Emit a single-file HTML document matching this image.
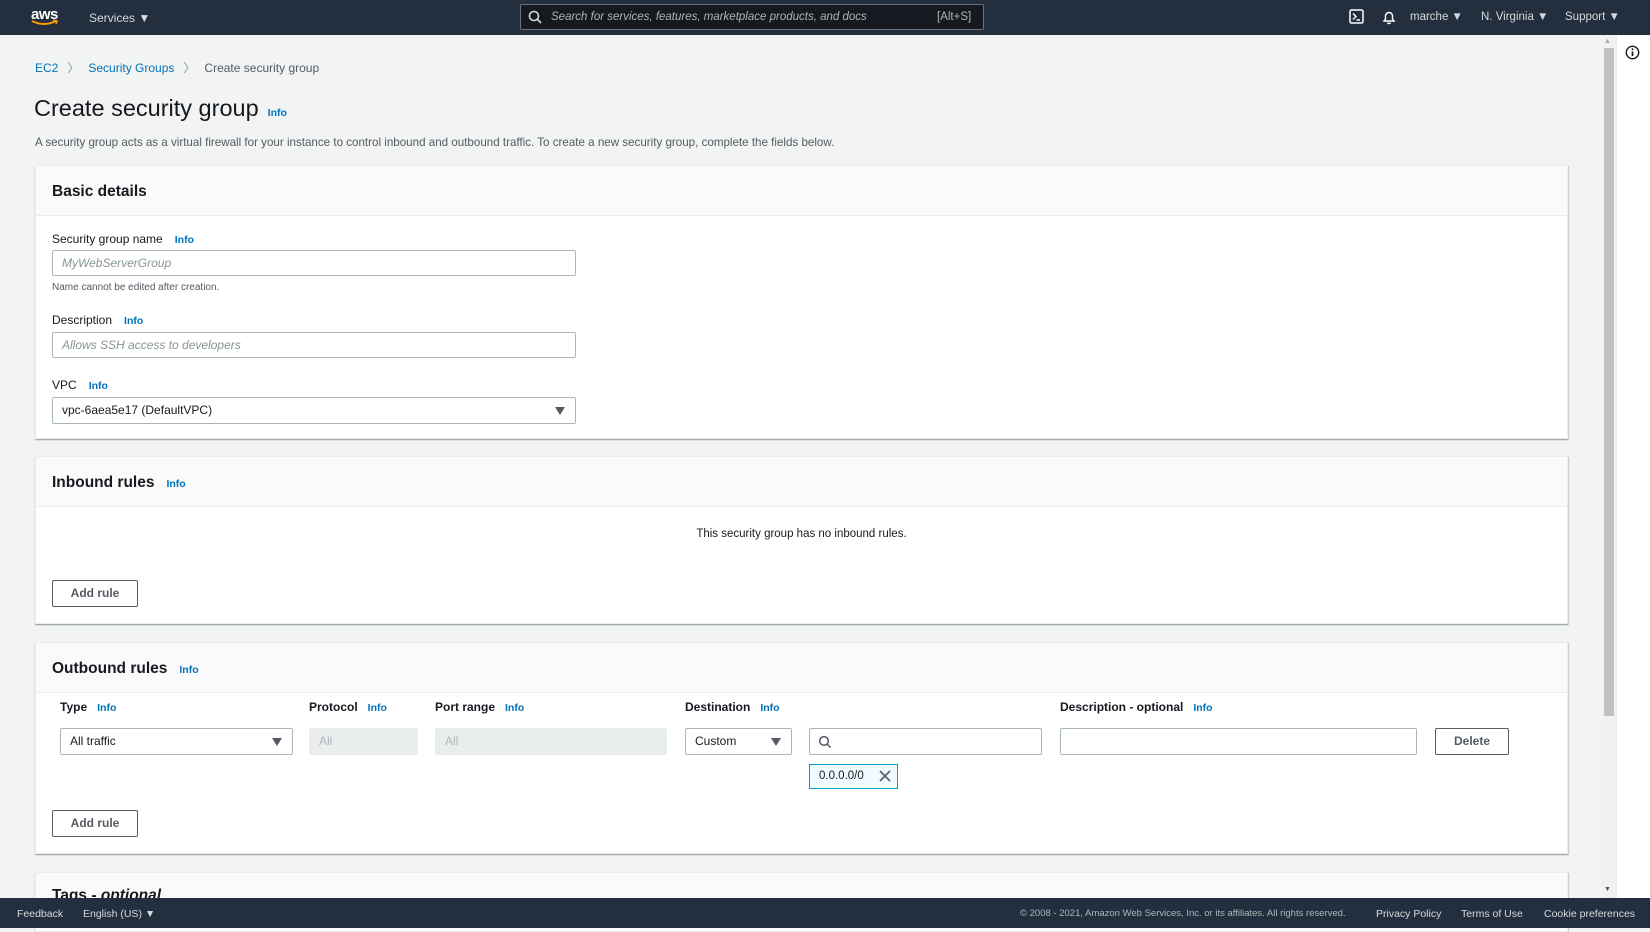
<!DOCTYPE html>
<html><head><meta charset="utf-8"><style>
*{box-sizing:border-box;margin:0;padding:0}
body{width:1650px;height:928px;overflow:hidden;background:#f2f3f3;font-family:"Liberation Sans",sans-serif;font-size:13px;color:#16191f;position:relative}
.a{position:absolute}
.nav{left:0;top:0;width:1650px;height:35px;background:#232f3e;color:#d5dbdb;font-size:11.5px}
.info{color:#0073bb;font-weight:bold;font-size:10.5px;margin-left:12px}
.panel{position:absolute;left:35px;width:1533px;background:#fff;border:1px solid #eaeded;box-shadow:0 1px 1px 0 rgba(0,28,36,.3),1px 1px 1px 0 rgba(0,28,36,.15)}
.ph{height:50px;background:#fafafa;border-bottom:1px solid #eaeded;padding:17px 16px;font-size:15.5px;font-weight:bold}
.inp{position:absolute;border:1px solid #aab7b8;border-radius:2px;background:#fff;height:26px;padding:5px 9px;font-size:12px;white-space:nowrap}
.ph2{color:#879596;font-style:italic}
.lbl{position:absolute;font-size:12px}
.btn{position:absolute;border:1px solid #545b64;border-radius:2px;background:#fff;font-weight:bold;font-size:12px;color:#545b64;text-align:center;height:27px;line-height:25px}
.tri{position:absolute;width:0;height:0;border-left:5px solid transparent;border-right:5px solid transparent;border-top:8px solid #545b64}
.dis{background:#eaeded;border-color:#eaeded;color:#aab7b8}
.ch{position:absolute;top:700px;font-weight:bold;font-size:12px}
.ch .info{margin-left:10px}
</style></head><body>
<div class="a nav">
  <div class="a" style="left:31px;top:6px;color:#fff;font-size:15px;font-weight:bold;letter-spacing:-.5px">aws</div>
  <svg class="a" style="left:30px;top:19px" width="30" height="8"><path d="M2 2 Q14 8 26 2" stroke="#f90" stroke-width="2" fill="none"/><path d="M23 1 L27 2 L26 5" stroke="#f90" stroke-width="1.5" fill="none"/></svg>
  <div class="a" style="left:89px;top:11px;font-size:12px">Services ▼</div>
  <div class="a" style="left:520px;top:4px;width:464px;height:26px;border:1px solid #687078;border-radius:2px;background:#16191f"></div>
  <svg class="a" style="left:528px;top:10px" width="14" height="14"><circle cx="6" cy="6" r="4.5" stroke="#d5dbdb" stroke-width="1.6" fill="none"/><path d="M9.5 9.5L13 13" stroke="#d5dbdb" stroke-width="1.6"/></svg>
  <div class="a" style="left:551px;top:11px;font-style:italic;color:#aab7b8;font-size:11.5px">Search for services, features, marketplace products, and docs</div>
  <div class="a" style="left:937px;top:11px;color:#aab7b8;font-size:11.5px">[Alt+S]</div>
  <svg class="a" style="left:1349px;top:9px" width="15" height="15"><rect x="1" y="1" width="13" height="13" rx="1.5" stroke="#fff" stroke-width="1.5" fill="none"/><path d="M4 4.5L7 7.5 4 10.5M7.5 11H11" stroke="#fff" stroke-width="1.4" fill="none"/></svg>
  <svg class="a" style="left:1381px;top:9px" width="16" height="16"><path d="M3 12 L4.5 10 V7 A3.5 3.5 0 0 1 11.5 7 V10 L13 12 Z M6.5 13.5 A1.6 1.6 0 0 0 9.5 13.5" stroke="#fff" stroke-width="1.4" fill="none"/></svg>
  <div class="a" style="left:1410px;top:11px">marche ▼</div>
  <div class="a" style="left:1481px;top:11px">N. Virginia ▼</div>
  <div class="a" style="left:1565px;top:11px">Support ▼</div>
</div>
<div class="a" style="left:35px;top:59px;font-size:12px;color:#0073bb">EC2<span style="color:#879596;margin:0 9px">〉</span>Security Groups<span style="color:#879596;margin:0 9px">〉</span><span style="color:#545b64">Create security group</span></div>
<div class="a" style="left:34px;top:95px;font-size:23.5px">Create security group<span class="info" style="font-size:10.5px;margin-left:9px">Info</span></div>
<div class="a" style="left:35px;top:136px;font-size:11.6px;color:#545b64">A security group acts as a virtual firewall for your instance to control inbound and outbound traffic. To create a new security group, complete the fields below.</div>

<div class="panel" style="top:165px;height:274px">
  <div class="ph">Basic details</div>
  <div class="lbl" style="left:16px;top:66px">Security group name<span class="info">Info</span></div>
  <div class="inp ph2" style="left:16px;top:84px;width:524px">MyWebServerGroup</div>
  <div class="a" style="left:16px;top:116px;font-size:10px;color:#545b64">Name cannot be edited after creation.</div>
  <div class="lbl" style="left:16px;top:147px">Description<span class="info">Info</span></div>
  <div class="inp ph2" style="left:16px;top:166px;width:524px">Allows SSH access to developers</div>
  <div class="lbl" style="left:16px;top:212px">VPC<span class="info">Info</span></div>
  <div class="inp" style="left:16px;top:231px;width:524px;height:27px">vpc-6aea5e17 (DefaultVPC)</div>
  <div class="tri" style="left:519px;top:241px"></div>
</div>

<div class="panel" style="top:456px;height:168px">
  <div class="ph">Inbound rules<span class="info">Info</span></div>
  <div class="a" style="left:0;width:100%;top:71px;text-align:center;font-size:11.5px">This security group has no inbound rules.</div>
  <div class="btn" style="left:16px;top:123px;width:86px">Add rule</div>
</div>

<div class="panel" style="top:642px;height:212px">
  <div class="ph">Outbound rules<span class="info">Info</span></div>
</div>
<div class="ch" style="left:60px">Type<span class="info">Info</span></div>
<div class="ch" style="left:309px">Protocol<span class="info">Info</span></div>
<div class="ch" style="left:435px">Port range<span class="info">Info</span></div>
<div class="ch" style="left:685px">Destination<span class="info">Info</span></div>
<div class="ch" style="left:1060px">Description - optional<span class="info">Info</span></div>
<div class="inp" style="left:60px;top:728px;width:233px;height:27px">All traffic</div>
<div class="tri" style="left:272px;top:738px"></div>
<div class="inp dis" style="left:309px;top:728px;width:109px;height:27px">All</div>
<div class="inp dis" style="left:435px;top:728px;width:232px;height:27px">All</div>
<div class="inp" style="left:685px;top:728px;width:107px;height:27px">Custom</div>
<div class="tri" style="left:771px;top:738px"></div>
<div class="inp" style="left:809px;top:728px;width:233px;height:27px"></div>
<svg class="a" style="left:818px;top:735px" width="14" height="14"><circle cx="6" cy="6" r="4.3" stroke="#545b64" stroke-width="1.5" fill="none"/><path d="M9 9L12.5 12.5" stroke="#545b64" stroke-width="1.5"/></svg>
<div class="inp" style="left:1060px;top:728px;width:357px;height:27px"></div>
<div class="btn" style="left:1435px;top:728px;width:74px">Delete</div>
<div class="a" style="left:809px;top:764px;width:89px;height:25px;border:1px solid #00a1c9;background:#f1faff;padding:5px 9px;font-size:11.5px">0.0.0.0/0</div>
<svg class="a" style="left:879px;top:770px" width="12" height="12"><path d="M1 1L11 11M11 1L1 11" stroke="#545b64" stroke-width="1.6"/></svg>
<div class="btn" style="left:52px;top:810px;width:86px">Add rule</div>

<div class="panel" style="top:872px;height:60px">
  <div class="ph" style="padding-top:14px">Tags - <i>optional</i></div>
</div>

<div class="a" style="left:1602px;top:35px;width:14px;height:863px;background:#f1f1f1"></div>
<div class="a" style="left:1604px;top:48px;width:10px;height:668px;background:#c1c1c1"></div>
<div class="a" style="left:1604px;top:38px;font-size:7px;color:#a3a3a3">▲</div>
<div class="a" style="left:1604px;top:886px;font-size:7px;color:#505050">▼</div>
<div class="a" style="left:1616px;top:35px;width:34px;height:863px;background:#fff;border-left:1px solid #eaeded"></div>
<svg class="a" style="left:1625px;top:45px" width="15" height="15"><circle cx="7.5" cy="7.5" r="6.2" stroke="#16191f" stroke-width="1.4" fill="none"/><path d="M7.5 6.5V11" stroke="#16191f" stroke-width="1.7"/><circle cx="7.5" cy="4.3" r="1" fill="#16191f"/></svg>

<div class="a" style="left:0;top:898px;width:1650px;height:30px;background:#232f3e;color:#d5dbdb;font-size:10.5px">
  <div class="a" style="left:17px;top:10px">Feedback</div>
  <div class="a" style="left:83px;top:10px">English (US) ▼</div>
  <div class="a" style="left:1020px;top:10px;font-size:9.5px;color:#aab7b8">© 2008 - 2021, Amazon Web Services, Inc. or its affiliates. All rights reserved.</div>
  <div class="a" style="left:1376px;top:10px">Privacy Policy</div>
  <div class="a" style="left:1461px;top:10px">Terms of Use</div>
  <div class="a" style="left:1544px;top:10px">Cookie preferences</div>
</div>
</body></html>
